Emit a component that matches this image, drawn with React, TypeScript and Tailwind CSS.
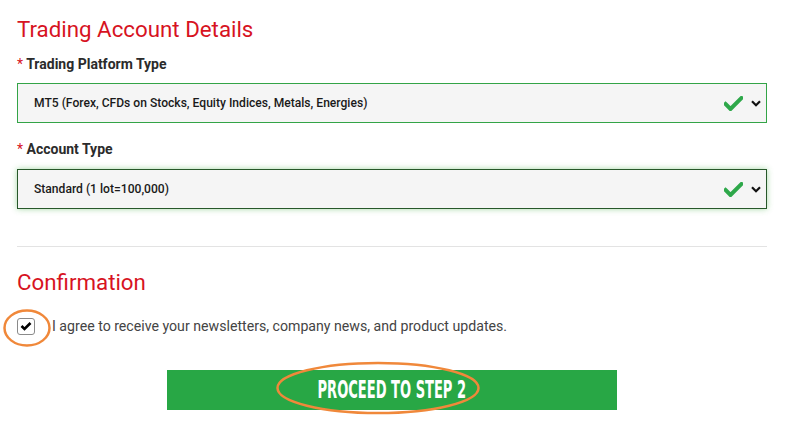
import React from "react";

const Check = () => (
  <svg width="19" height="15" viewBox="0 0 19 15" className="block">
    <path d="M1.5 8 L6.5 13 L17.5 2" fill="none" stroke="#2ea84a" strokeWidth="4" strokeLinecap="square" />
  </svg>
);

const Chevron = () => (
  <svg width="10" height="7" viewBox="0 0 10 7" className="block">
    <path d="M1 1.2 L5 5.2 L9 1.2" fill="none" stroke="#111" strokeWidth="2.2" />
  </svg>
);

function SelectBox({ text, focused }: { text: string; focused?: boolean }) {
  return (
    <div
      className={
        "h-[40px] w-full flex items-center bg-[#f5f5f5] pl-[16px] pr-[5px] " +
        (focused
          ? "border border-[#27582a] shadow-[0_0_6px_rgba(60,170,60,0.45)]"
          : "border border-[#33a447]")
      }
    >
      <span className="flex-1 text-[12.1px] font-medium text-[#1a1a1a]">{text}</span>
      <Check />
      <span className="ml-[8px]"><Chevron /></span>
    </div>
  );
}

export default function App() {
  return (
    <div
      className="relative w-[787px] h-[439px] bg-white overflow-hidden"
      style={{ fontFamily: "Roboto, 'Liberation Sans', sans-serif" }}
    >
      <div className="px-[17px] w-[784px] pt-[15px]">
        <h2 className="text-[22.3px] leading-[28px] text-[#d7131f]">Trading Account Details</h2>
        <div className="mt-[13px] text-[14px] leading-[16px] font-bold text-[#2b2b2b]">
          <span className="text-[#d7131f] font-normal">*</span> Trading Platform Type
        </div>
        <div className="mt-[11px]">
          <SelectBox text="MT5 (Forex, CFDs on Stocks, Equity Indices, Metals, Energies)" />
        </div>
        <div className="mt-[18px] text-[14px] leading-[16px] font-bold text-[#2b2b2b]">
          <span className="text-[#d7131f] font-normal">*</span> Account Type
        </div>
        <div className="mt-[12px]">
          <SelectBox text="Standard (1 lot=100,000)" focused />
        </div>
        <div className="mt-[37px] h-px bg-[#e3e3e3]" />
        <h2 className="mt-[21px] text-[22.3px] leading-[28px] text-[#d7131f]">Confirmation</h2>
        <div className="mt-[21px] flex items-center">
          <div className="w-[18px] h-[17px] border border-[#8a8a8a] rounded-[3px] bg-white flex items-center justify-center">
            <svg width="12" height="10" viewBox="0 0 12 10">
              <path d="M1.5 5 L4.5 8 L10.5 2" fill="none" stroke="#000" strokeWidth="2.6" />
            </svg>
          </div>
          <span className="ml-[17px] text-[14.15px] leading-[18px] text-[#444]">
            I agree to receive your newsletters, company news, and product updates.
          </span>
        </div>
        <div className="mt-[35px] flex justify-center">
          <div className="w-[450px] h-[40px] bg-[#28a745] flex items-center justify-center">
            <span
              className="text-white font-bold text-[24px] leading-[28px] inline-block"
              style={{ fontFamily: "'Liberation Sans Narrow', 'DejaVu Sans Condensed', sans-serif", transform: "scaleX(0.605)" }}
            >
              PROCEED TO STEP 2
            </span>
          </div>
        </div>
      </div>
      <svg className="absolute left-[2px] top-[308px]" width="50" height="40" viewBox="0 0 50 40">
        <ellipse cx="25" cy="20" rx="22.5" ry="17.5" fill="none" stroke="#f0883a" strokeWidth="2.5" />
      </svg>
      <svg className="absolute left-[275px] top-[360px]" width="206" height="56" viewBox="0 0 206 56">
        <ellipse cx="103" cy="28" rx="100.5" ry="25" fill="none" stroke="#f0883a" strokeWidth="2.5" />
      </svg>
    </div>
  );
}
